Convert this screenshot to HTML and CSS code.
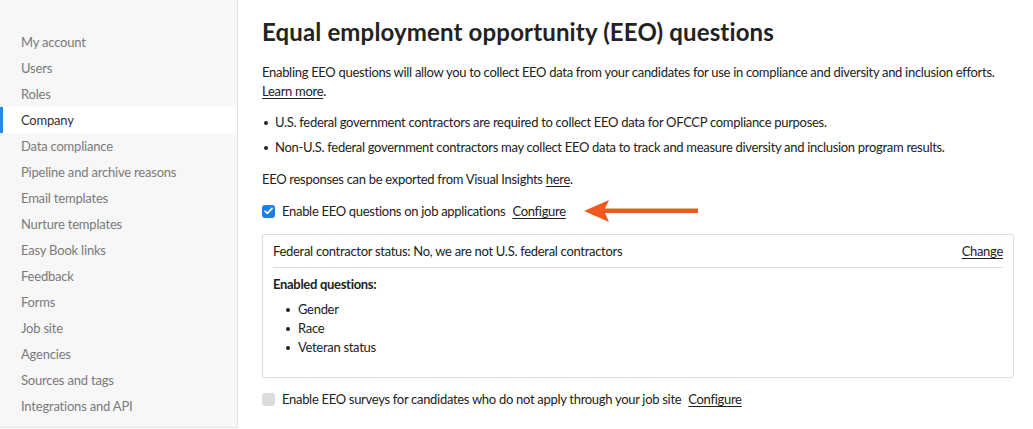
FILE: index.html
```html
<!DOCTYPE html>
<html lang="en">
<head>
<meta charset="utf-8">
<title>EEO settings</title>
<link rel="stylesheet" href="styles.css">
</head>
<body>
<div class="app">
  <nav class="sidebar">
    <ul class="nav-list">
      <li class="nav-item">My account</li>
      <li class="nav-item">Users</li>
      <li class="nav-item">Roles</li>
      <li class="nav-item active">Company</li>
      <li class="nav-item">Data compliance</li>
      <li class="nav-item">Pipeline and archive reasons</li>
      <li class="nav-item">Email templates</li>
      <li class="nav-item">Nurture templates</li>
      <li class="nav-item">Easy Book links</li>
      <li class="nav-item">Feedback</li>
      <li class="nav-item">Forms</li>
      <li class="nav-item">Job site</li>
      <li class="nav-item">Agencies</li>
      <li class="nav-item">Sources and tags</li>
      <li class="nav-item">Integrations and API</li>
    </ul>
  </nav>
  <main class="content">
    <h1 class="title">Equal employment opportunity (EEO) questions</h1>
    <p class="intro">Enabling EEO questions will allow you to collect EEO data from your candidates for use in compliance and diversity and inclusion efforts. <a class="link" href="#">Learn more</a>.</p>
    <ul class="bullets">
      <li>U.S. federal government contractors are required to collect EEO data for OFCCP compliance purposes.</li>
      <li>Non-U.S. federal government contractors may collect EEO data to track and measure diversity and inclusion program results.</li>
    </ul>
    <p class="export">EEO responses can be exported from Visual Insights <a class="link" href="#">here</a>.</p>
    <div class="check-row">
      <span class="checkbox checked">
        <svg width="9" height="8" viewBox="0 0 9 8"><path d="M1 4.2 L3.4 6.4 L8 1.4" fill="none" stroke="#fff" stroke-width="1.6" stroke-linecap="round" stroke-linejoin="round"/></svg>
      </span>
      <span class="check-label">Enable EEO questions on job applications</span>
      <a class="link configure" href="#">Configure</a>
      <span class="arrow">
        <svg width="116" height="24" viewBox="0 0 116 24"><polygon points="0,12 25,1 21,9.5 114,9.5 114,14 21,14 25,23" fill="#f05a1e"/></svg>
      </span>
    </div>
    <div class="panel">
      <div class="panel-head">
        <span>Federal contractor status: No, we are not U.S. federal contractors</span>
        <a class="link" href="#">Change</a>
      </div>
      <div class="panel-body">
        <div class="panel-label">Enabled questions:</div>
        <ul class="questions">
          <li>Gender</li>
          <li>Race</li>
          <li>Veteran status</li>
        </ul>
      </div>
    </div>
    <div class="check-row second">
      <span class="checkbox disabled"></span>
      <span class="check-label">Enable EEO surveys for candidates who do not apply through your job site</span>
      <a class="link configure" href="#">Configure</a>
    </div>
  </main>
</div>
</body>
</html>
```
FILE: styles.css
```css
* { box-sizing: border-box; }
html, body { margin: 0; padding: 0; }
body {
  font-family: "Lato", "Noto Sans", sans-serif;
  font-size: 13px;
  letter-spacing: -0.3px;
  color: #222;
  background: #fff;
  width: 1033px;
  height: 429px;
  overflow: hidden;
}
.app { display: flex; height: 429px; }
.sidebar {
  width: 238px;
  flex: none;
  background: #f7f7f7;
  border-right: 1px solid #e2e2e2;
  border-bottom: 1px solid #e2e2e2;
  height: 428px;
}
.nav-list { list-style: none; margin: 0; padding: 29px 0 0 0; }
.nav-item {
  height: 26px;
  line-height: 26px;
  padding-left: 21px;
  color: #7a7a7a;
  font-size: 13px;
  letter-spacing: -0.2px;
  border-left: 3px solid transparent;
  text-indent: -3px;
}
.nav-item.active {
  background: #fff;
  color: #333;
  border-left-color: #1d8cf0;
}
.content { padding: 17px 0 0 24px; flex: 1; }
.title {
  margin: 0;
  font-size: 24px;
  font-weight: 700;
  letter-spacing: 0.15px;
  line-height: 30px;
  color: #222;
}
.intro { margin: 16px 0 0 0; line-height: 19px; width: 745px; }
.link { color: #222; text-decoration: underline; text-underline-offset: 2px; }
.bullets { margin: 12px 0 0 0; padding: 0 0 0 13px; list-style: none; }
.bullets li { line-height: 19px; margin-bottom: 6px; position: relative; }
.bullets li::before {
  content: ""; position: absolute; left: -11px; top: 8px;
  width: 4px; height: 4px; border-radius: 50%; background: #222;
}
.export { margin: 13px 0 0 0; line-height: 19px; }
.check-row { display: flex; align-items: center; height: 24px; margin-top: 10px; }
.checkbox {
  width: 13px; height: 13px; border-radius: 3px; flex: none;
  display: flex; align-items: center; justify-content: center;
  margin-right: 7px;
}
.checkbox.checked { background: #1a7fe6; }
.checkbox.disabled { background: #dcdcdc; }
.configure { margin-left: 7px; }
.arrow { margin-left: 18px; display: flex; }
.panel {
  margin-top: 11px;
  width: 752px;
  border: 1px solid #dedede;
  border-radius: 3px;
  padding: 0 10px 20px 10px;
}
.panel-head {
  display: flex; justify-content: space-between; align-items: center;
  height: 33px;
  border-bottom: 1px solid #e0e0e0;
}
.panel-body { padding-top: 7px; }
.panel-label { font-weight: 700; line-height: 18px; }
.questions { margin: 7px 0 0 0; padding: 0 0 0 25px; list-style: none; }
.questions li { line-height: 19px; position: relative; }
.questions li::before {
  content: ""; position: absolute; left: -12px; top: 8px;
  width: 4px; height: 4px; border-radius: 50%; background: #222;
}
.check-row.second { margin-top: 9px; }
```
